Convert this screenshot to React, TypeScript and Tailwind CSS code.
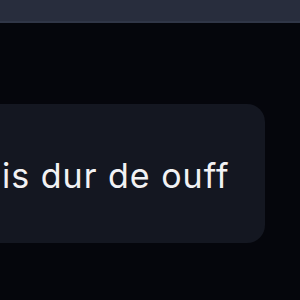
export default function App() {
  return (
    <div className="w-[300px] h-[300px] overflow-hidden bg-[#05060c] flex flex-col" style={{ fontFamily: "Inter, 'Noto Sans', sans-serif" }}>
      <div className="h-[23px] shrink-0 bg-[#282d3d] border-b-2 border-[#303647]" />
      <div className="pt-[81px]">
        <div className="w-[265px] h-[139px] rounded-r-[18px] bg-[#141721] flex items-center pl-[2px] pt-[4px]">
          <span className="text-[34px] leading-none tracking-[1px] text-[#f2f2f4] whitespace-nowrap">is dur de ouff</span>
        </div>
      </div>
    </div>
  );
}
